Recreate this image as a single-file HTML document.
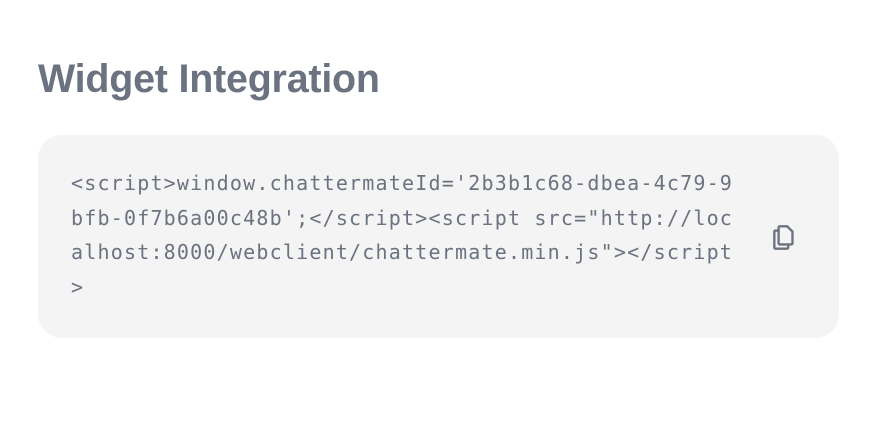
<!DOCTYPE html>
<html><head><style>
body{margin:0;width:876px;height:432px;background:#fff;font-family:"Liberation Sans",sans-serif;position:relative;overflow:hidden}
h1{position:absolute;left:38px;top:55px;margin:0;font-size:39.4px;font-weight:bold;color:#6b7280;letter-spacing:-0.2px;line-height:48px}
.card{position:absolute;left:38px;top:135px;width:801px;height:203px;background:#f5f4f5;border-radius:24px}
.code{position:absolute;left:71px;top:166px;width:675px;font-family:"DejaVu Sans Mono","Liberation Mono",monospace;font-size:20px;letter-spacing:1.2px;line-height:34.5px;color:#6b7280;word-break:break-all}
svg{position:absolute;left:770px;top:222px}
</style></head><body>
<h1>Widget Integration</h1>
<div class="card"></div>
<div class="code">&lt;script&gt;window.chattermateId='2b3b1c68-dbea-4c79-9bfb-0f7b6a00c48b';&lt;/script&gt;&lt;script src="http://localhost:8000/webclient/chattermate.min.js"&gt;&lt;/script&gt;</div>
<svg width="30" height="32" viewBox="0 0 28 30" fill="none" stroke="#6b7280" stroke-width="2.2" stroke-linejoin="round">
<path d="M9 4h7l5 5v11a1 1 0 0 1-1 1H9a1 1 0 0 1-1-1V5a1 1 0 0 1 1-1z"/>
<path d="M8 8H5a1 1 0 0 0-1 1v15a1 1 0 0 0 1 1h11a1 1 0 0 0 1-1v-3"/>
</svg>
</body></html>
